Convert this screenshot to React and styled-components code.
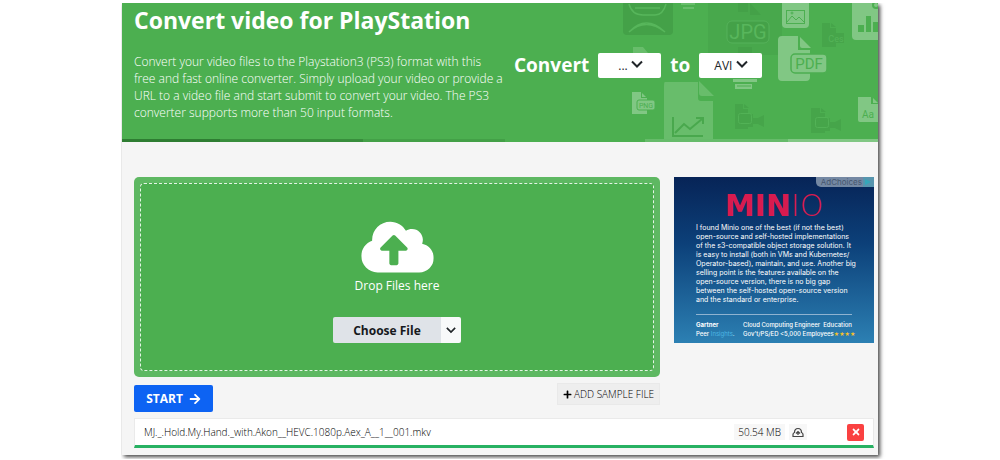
import React from "react";
import styled, { createGlobalStyle } from "styled-components";
import { FaArrowRight, FaPlus, FaTimes, FaCloudUploadAlt } from "react-icons/fa";

const GlobalStyle = createGlobalStyle`
  *, *::before, *::after { box-sizing: border-box; }
  body { margin: 0; background: #fff; font-family: "Open Sans", "Noto Sans", sans-serif; color: #212529; }
  button, select { font-family: inherit; margin: 0; cursor: pointer; }
  h1, p { margin: 0; }
`;

const Page = styled.div`
  padding: 3px 12.2% 4px;
`;

const Card = styled.main`
  background: #f5f5f5;
  box-shadow: 2px 2px 4px #444;
  clip-path: inset(0 -8px -8px -1px);
`;

const Hero = styled.header`
  position: relative;
  background: #4caf50;
  color: #fff;
`;

const HeroArt = styled.svg`
  position: absolute;
  right: 0;
  bottom: 0;
`;

const HeroBody = styled.div`
  position: relative;
  display: grid;
  grid-template-columns: 360px 1fr;
  column-gap: 20px;
  height: 136px;
  padding: 1px 12px 0;
`;

const Title = styled.h1`
  font-size: 23px;
  line-height: 32px;
  font-weight: 700;
  white-space: nowrap;
`;

const Description = styled.p`
  margin-top: 17px;
  font-size: 12px;
  line-height: 17px;
  font-weight: 300;
  white-space: nowrap;
`;

const Formats = styled.div`
  display: flex;
  align-items: center;
  align-self: start;
  gap: 9px;
  margin-top: 49px;
  font-size: 19px;
  line-height: 25px;
  font-weight: 700;
`;

const SelectBox = styled.div`
  position: relative;
  color: #212529;
  svg { position: absolute; right: ${(p) => p.$arrow}px; top: 5px; pointer-events: none; }
`;

const FormatSelect = styled.select`
  display: block;
  appearance: none;
  width: 63px;
  height: 25px;
  padding: 0 0 0 ${(p) => p.$inset}px;
  border: 0;
  border-radius: 2px;
  background: #fff;
  color: #212529;
  font-size: 12px;
`;

const Stripe = styled.div`
  position: relative;
  display: grid;
  grid-template-columns: 98fr 143fr 142fr 140fr 143fr 90fr;
  height: 3px;
`;

const Band = styled.span`
  background: ${(p) => p.$color};
`;

const Content = styled.section`
  padding: 35px 4px 7px 12px;
`;

const Columns = styled.div`
  display: grid;
  grid-template-columns: 1fr 200px;
  column-gap: 14px;
  align-items: start;
`;

const DropZone = styled.div`
  padding: 6px;
  border-radius: 5px;
  background: #5eb862;
`;

const DropArea = styled.div`
  display: flex;
  flex-direction: column;
  align-items: center;
  height: 188px;
  padding-top: 34px;
  border: 1px dashed #e4f4e5;
  border-radius: 4px;
  background: #4caf50;
  color: #fff;
`;

const DropText = styled.p`
  font-size: 12px;
  line-height: 20px;
`;

const SplitButton = styled.div`
  display: flex;
  height: 26px;
  margin-top: 21px;
  border-radius: 2px;
  overflow: hidden;
`;

const ChooseButton = styled.button`
  width: 108px;
  padding: 0;
  border: 0;
  background: #dfe3e8;
  color: #16191d;
  font-size: 12px;
  font-weight: 700;
`;

const MoreButton = styled.button`
  display: grid;
  place-items: center;
  width: 20px;
  padding: 0;
  border: 0;
  background: #f8f9fa;
  color: #212529;
`;

const Actions = styled.div`
  display: flex;
  justify-content: space-between;
  align-items: flex-start;
  margin-top: 6px;
`;

const StartButton = styled.button`
  display: flex;
  align-items: center;
  justify-content: center;
  gap: 6px;
  width: 79px;
  height: 27px;
  margin-top: 2px;
  padding: 0;
  border: 0;
  border-radius: 2px;
  background: #0d63f3;
  color: #fff;
  font-size: 12px;
  font-weight: 700;
`;

const SampleButton = styled.button`
  display: flex;
  align-items: center;
  justify-content: center;
  gap: 2px;
  width: 103px;
  height: 22px;
  padding: 0;
  border: 1px solid #e9e9e9;
  background: #eee;
  color: #000;
  font-size: 10px;
  font-weight: 300;
`;

const Ad = styled.aside`
  position: relative;
  height: 166px;
  padding: 14px 22px 0;
  background: linear-gradient(#072457, #0c4079 40%, #2c80b3);
  color: #fff;
  font-family: Inter, "Liberation Sans", sans-serif;
`;

const AdChoices = styled.a`
  position: absolute;
  top: 0;
  right: 0;
  display: flex;
  align-items: center;
  justify-content: flex-end;
  gap: 1px;
  width: 58px;
  height: 10px;
  border-bottom-left-radius: 5px;
  background: #7488a3;
  color: #46566e;
  font-size: 8px;
  text-decoration: none;
`;

const AdLogo = styled.div`
  height: 30px;
  color: #d81b4f;
  font-family: "DejaVu Sans", sans-serif;
  font-size: 30px;
  line-height: 30px;
  font-weight: 700;
  text-align: center;
  white-space: nowrap;
`;

const Thin = styled.span`
  font-weight: 200;
`;

const AdText = styled.p`
  margin-top: 2px;
  font-size: 7px;
  line-height: 9px;
  white-space: nowrap;
`;

const AdFooter = styled.div`
  display: grid;
  grid-template-columns: 47px 1fr;
  width: 156px;
  margin-top: 10px;
  padding-top: 5px;
  border-top: 1px solid #8fb3d0;
  font-size: 6px;
  line-height: 9px;
  font-weight: 500;
  white-space: nowrap;
`;

const AdLine = styled.div`
  display: flex;
  justify-content: space-between;
`;

const Insights = styled.span`
  color: #4db6e4;
  font-weight: 400;
`;

const Stars = styled.span`
  color: #f5c02c;
  font-family: "DejaVu Sans", sans-serif;
`;

const FileRow = styled.div`
  display: flex;
  align-items: center;
  height: 30px;
  margin-top: 6px;
  padding: 0 9px;
  border: 1px solid #eaeaea;
  border-bottom: 3px solid #27b162;
  background: #fff;
  color: #000;
  font-size: 10px;
  font-weight: 300;
`;

const FileName = styled.span`
  flex: 1;
`;

const Tag = styled.span`
  display: grid;
  place-items: center;
  height: 16px;
  padding: 0 4px;
  margin-right: 4px;
  background: #f7f7f7;
`;

const CloudButton = styled.button`
  display: grid;
  place-items: center;
  width: 18px;
  height: 16px;
  margin-right: 40px;
  padding: 0;
  border: 0;
  background: #f7f7f7;
  color: #444;
`;

const RemoveButton = styled.button`
  display: grid;
  place-items: center;
  width: 17px;
  height: 17px;
  padding: 0;
  border: 0;
  border-radius: 2px;
  background: #fa4141;
  color: #fff;
`;

const Chevron = ({ size }) => (
  <svg width={size} height={size} viewBox="0 0 12 12" fill="none" stroke="currentColor" strokeWidth="2" aria-hidden="true">
    <path d="M1 3.500 6 8.500l5-5" />
  </svg>
);

const Pattern = () => (
  <HeroArt width="258" height="139" viewBox="0 0 258 139" fontFamily="Roboto" aria-hidden="true">
    <rect x="88" width="74" height="52" fill="#48a84c" />
    <g fill="#44a148">
      <path d="M3 0h50v28q0 4-4 4H7q-4 0-4-4z" />
      <rect x="107" y="18" width="42" height="22" rx="5" />
      <path d="M118 0h10v9h-10zM130 0l11 12h-11zM118 44h14v7h-14z" />
    </g>
    <g fill="#46a54a">
      <path d="M115 101h8v5h5v5h5v4h5l6-3v12l-6-3h-5v3h-5v2h-13z" />
      <path d="M124 101l5 4h-5zM201 105l5 4h-5z" />
      <path d="M191 105h9v5h5v5h5v4h5l6-3v12l-6-3h-5v3h-5v2h-14z" />
      <path d="M202 20h8v5h6v5h8v10h-8v4h-14z" />
      <path d="M211 20l5 4h-5z" />
    </g>
    <g fill="none" stroke="#52b256">
      <rect x="118.500" y="110.500" width="13" height="10" rx="2" />
      <rect x="195.500" y="114.500" width="13" height="10" rx="2" />
    </g>
    <g fill="none" stroke="#57b65b" strokeWidth="1.500">
      <path d="M9 1q3 11 14 11h12q8 0 11-11M15 5h25M9 29q17-15 36 0M9 29q17-18 36 0" />
    </g>
    <rect x="107" y="18" width="42" height="22" rx="5" fill="none" stroke="#55b25a" />
    <text x="128" y="36" textAnchor="middle" fontSize="20" fill="#58b65c">JPG</text>
    <text x="216" y="39" textAnchor="middle" fontSize="9" fill="#55b459">Ces</text>
    <g fill="#68bd6b">
      <path d="M45 79h33v16q0 3 3 3h12v41H44V83q0-4 1-4z" />
      <path d="M79 78 94 93H82q-3 0-3-3zM13 44h10l5 6H13z" />
      <path d="M61 0h14v2H61zM63 4h11v2H63z" />
    </g>
    <path d="M53 114v19h30M55 130l9-9 6 5 12-10M76 115h7v6" fill="none" stroke="#49a84d" strokeWidth="2" />
    <g fill="#81c784">
      <path d="M162 0h27v21q0 4-4 4h-19q-4 0-4-4z" />
      <path d="M162 33h16v14h12v27q0 4-4 4h-24q-4 0-4-4V37q0-4 4-4z" />
      <path d="M180 34l11 11h-9q-2 0-2-2z" />
      <path d="M232 0h26v37h-22q-4 0-4-4z" />
      <path d="M238 94h13v7h7v18h-18q-2 0-2-2z" />
      <path d="m253 95 5 5h-5z" />
      <path d="M12 89h9v6h6v16H12z" />
      <path d="m22 90 4 4h-4zM113 76h24v3h-24zM115 81h17v5h-17z" />
    </g>
    <g fill="none" stroke="#4caf50">
      <rect x="166.500" y="7.500" width="18" height="13" />
      <path d="m167 19 5-6 4 4 3-3 6 6" />
      <circle cx="172" cy="10" r="1" />
      <path d="M117 83h14" />
    </g>
    <rect x="171" y="51" width="36" height="19" rx="4" fill="#81c784" stroke="#4caf50" strokeWidth="1.500" />
    <text x="189" y="66" textAnchor="middle" fontSize="15" fill="#4caf50">PDF</text>
    <rect x="17" y="97" width="18" height="10" rx="2" fill="#81c784" stroke="#4caf50" />
    <text x="26" y="105" textAnchor="middle" fontSize="7" fill="#4caf50">PNG</text>
    <text x="248" y="115" textAnchor="middle" fontSize="10" fill="#4caf50">Aa</text>
    <path d="M238 22h6v7h-6zM246 13h5v16h-5zM253 19h5v10h-5z" fill="#4caf50" />
    <circle cx="256" cy="2" r="3" fill="none" stroke="#4caf50" strokeWidth="2" />
  </HeroArt>
);

const bands = ["#2e7d32", "#388e3c", "#43a047", "#4caf50", "#66bb6a", "#81c784"];

export default function App() {
  return (
    <Page>
      <GlobalStyle />
      <Card>
        <Hero>
          <Pattern />
          <HeroBody>
            <div>
              <Title>Convert video for PlayStation</Title>
              <Description>
                Convert your video files to the Playstation3 (PS3) format with this<br />
                free and fast online converter. Simply upload your video or provide a<br />
                URL to a video file and start submit to convert your video. The PS3<br />
                converter supports more than 50 input formats.
              </Description>
            </div>
            <Formats>
              <label htmlFor="source">Convert</label>
              <SelectBox $arrow={18}>
                <FormatSelect id="source" $inset={20}><option>...</option></FormatSelect>
                <Chevron size={12} />
              </SelectBox>
              <label htmlFor="target">to</label>
              <SelectBox $arrow={14}>
                <FormatSelect id="target" $inset={15}><option>AVI</option></FormatSelect>
                <Chevron size={12} />
              </SelectBox>
            </Formats>
          </HeroBody>
          <Stripe>{bands.map((color) => <Band key={color} $color={color} />)}</Stripe>
        </Hero>
        <Content>
          <Columns>
            <div>
              <DropZone>
                <DropArea>
                  <svg width="75" height="58" viewBox="0 0 640 512" aria-hidden="true">
                    <FaCloudUploadAlt size={640} x="0" y="-64" color="#fff" />
                  </svg>
                  <DropText>Drop Files here</DropText>
                  <SplitButton>
                    <ChooseButton type="button">Choose File</ChooseButton>
                    <MoreButton type="button" aria-label="More sources"><Chevron size={10} /></MoreButton>
                  </SplitButton>
                </DropArea>
              </DropZone>
              <Actions>
                <StartButton type="button">START <FaArrowRight size={12} /></StartButton>
                <SampleButton type="button"><FaPlus size={9} /> ADD SAMPLE FILE</SampleButton>
              </Actions>
            </div>
            <Ad>
              <AdChoices href="#adchoices">
                AdChoices
                <svg width="11" height="10" viewBox="0 0 11 10" aria-hidden="true">
                  <path d="M0 0h11v10H0z" fill="#5795ae" />
                  <path d="m2 2 6 3-6 3z" fill="#35a7b9" />
                </svg>
              </AdChoices>
              <AdLogo>MIN<Thin>IO</Thin></AdLogo>
              <AdText>
                I found Minio one of the best (if not the best)<br />
                open-source and self-hosted implementations<br />
                of the s3-compatible object storage solution. It<br />
                is easy to install (both in VMs and Kubernetes/<br />
                Operator-based), maintain, and use. Another big<br />
                selling point is the features available on the<br />
                open-source version, there is no big gap<br />
                between the self-hosted open-source version<br />
                and the standard or enterprise.
              </AdText>
              <AdFooter>
                <div><b>Gartner</b><br />Peer <Insights>Insights</Insights>.</div>
                <div>
                  Cloud Computing Engineer&nbsp; Education
                  <AdLine>Gov't/PS/ED &lt;5,000 Employees <Stars>★★★★</Stars></AdLine>
                </div>
              </AdFooter>
            </Ad>
          </Columns>
          <FileRow>
            <FileName>MJ._.Hold.My.Hand._with.Akon__HEVC.1080p.Aex_A__1__001.mkv</FileName>
            <Tag>50.54 MB</Tag>
            <CloudButton type="button" aria-label="Save to cloud">
              <svg width="12" height="11" viewBox="0 0 12 11" fill="none" stroke="currentColor" strokeWidth="1.200" aria-hidden="true">
                <path d="M1 9.500V7.500Q1 6 2.500 5.500 2.500 1.500 6 1.500t3.500 4Q11 6 11 7.500v2zM6 8V4.500M4 6.500l2-2 2 2" />
              </svg>
            </CloudButton>
            <RemoveButton type="button" aria-label="Remove file"><FaTimes size={10} /></RemoveButton>
          </FileRow>
        </Content>
      </Card>
    </Page>
  );
}
